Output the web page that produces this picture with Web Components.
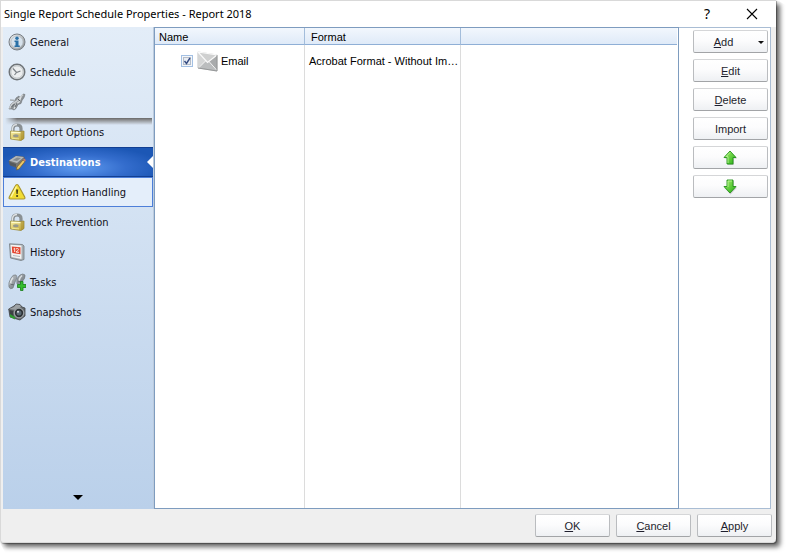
<!DOCTYPE html>
<html lang="en">
<head>
<meta charset="utf-8">
<title>Single Report Schedule Properties - Report 2018</title>
<style>
  body { margin: 0; background: #fff; color: #000; font: 11px/14px "Liberation Sans", Arial, sans-serif; }
</style>
</head>
<body>
<schedule-dialog>
  <title-bar slot="title">Single Report Schedule Properties - Report 2018</title-bar>
  <side-nav slot="nav">
    <nav-item icon="info">General</nav-item>
    <nav-item icon="clock">Schedule</nav-item>
    <nav-item icon="tools">Report</nav-item>
    <nav-item icon="lock" seam>Report Options</nav-item>
    <nav-item icon="drive" selected>Destinations</nav-item>
    <nav-item icon="warn" hot>Exception Handling</nav-item>
    <nav-item icon="lock">Lock Prevention</nav-item>
    <nav-item icon="calendar">History</nav-item>
    <nav-item icon="steps">Tasks</nav-item>
    <nav-item icon="camera">Snapshots</nav-item>
  </side-nav>
  <destination-list slot="content"></destination-list>
  <push-button slot="actions" menu><u>A</u>dd</push-button>
  <push-button slot="actions"><u>E</u>dit</push-button>
  <push-button slot="actions"><u>D</u>elete</push-button>
  <push-button slot="actions">Import</push-button>
  <push-button slot="actions" label="Move up"><ui-icon name="up"></ui-icon></push-button>
  <push-button slot="actions" label="Move down"><ui-icon name="down"></ui-icon></push-button>
  <push-button slot="footer"><u>O</u>K</push-button>
  <push-button slot="footer"><u>C</u>ancel</push-button>
  <push-button slot="footer"><u>A</u>pply</push-button>
</schedule-dialog>

<script>
const GRADS = `<defs>
<linearGradient id="silver" x1="0" y1="0" x2="1" y2="1"><stop offset="0" stop-color="#f4f5f5"/><stop offset="1" stop-color="#85898c"/></linearGradient>
<linearGradient id="dark" x1="0" y1="0" x2="1" y2="1"><stop offset="0" stop-color="#c3c8cc"/><stop offset="1" stop-color="#5c6268"/></linearGradient>
<linearGradient id="gold" x1="0" y1="0" x2="1" y2="1"><stop offset="0" stop-color="#fbf3a6"/><stop offset="1" stop-color="#b99c30"/></linearGradient>
<linearGradient id="green" x1="0" y1="0" x2="1" y2="1"><stop offset="0" stop-color="#a5f06a"/><stop offset="1" stop-color="#27ae17"/></linearGradient>
</defs>`;
const ICONS = {
  info: [18, 18, `<circle cx="9" cy="9" r="8" fill="url(#silver)" stroke="#777e85"/><circle cx="9" cy="9" r="6" fill="#d7e2ec" stroke="#b3bdc6" stroke-width=".7"/><circle cx="9" cy="5.3" r="1.7" fill="#2a70a6"/><path d="M6.500 7.500h4v5h1.300V14H6.500v-1.500h1V9h-1z" fill="#2a70a6"/>`],
  clock: [18, 18, `<circle cx="9" cy="9" r="7.700" fill="#eceeef" stroke="#6f7478" stroke-width="1.600"/><circle cx="9" cy="9" r="6.200" fill="none" stroke="#bbc0c3" stroke-width="1"/><path d="M5 5.500L8.500 9.500l4-1.500M8.500 9.500L6.500 12" fill="none" stroke="#7d8287" stroke-width="1.200"/>`],
  tools: [18, 18, `<path d="M1 16l2-5 4-3 1-3 3-2 1 2 3-4 2 .5-1 3-2 3-1 3-3 1-2 4-2 1.500-2-1z" fill="#8d9296" stroke="#6b7074" stroke-width=".6"/><path d="M1.500 15.500L4 11l5-3 6-6.500" fill="none" stroke="#c9cdd0" stroke-width="1.500"/><path d="M6 16l2-5 3-2 2-5" fill="none" stroke="#dce0e2" stroke-width="1.300"/><path d="M3.500 14l3-3M7 14l2-4M10 6l2 2" stroke="#54595d" stroke-width=".9"/><path d="M2 7l5 .5" stroke="#a7adb1" stroke-width="1.500"/>`],
  lock: [18, 18, `<path d="M5 9V5.500Q5 2 9 2t4 3.500V9" fill="none" stroke="#8a9093" stroke-width="3.200"/><path d="M4.500 9V5.500Q5 1.500 9 1.500" fill="none" stroke="#dfe2e4" stroke-width="1.300"/><path d="M2.500 8l10 .5L16 8v7.500L13 17.500 2.500 16z" fill="url(#gold)" stroke="#94822f" stroke-width=".7"/><path d="M12.500 8.500L16 8v7.500l-3 2z" fill="#a68c30" opacity=".55"/><path d="M3.500 9.300l9 .3" stroke="#fffbc8" stroke-width="1.300"/><ellipse cx="7.800" cy="12.800" rx="2.900" ry="1.500" fill="#96988a"/><path d="M4 15.300l7 .6" stroke="#f0e88f"/>`],
  drive: [18, 18, `<path d="M1 8l7-5 8 1 1 4-7 7-8-3z" fill="#777775" stroke="#5a5751" stroke-width=".6"/><path d="M1 7.500L8 3l8 1-7 6z" fill="#b4b9bc"/><path d="M4.500 7.300L9 4.500l4 .5-4 3z" fill="#848a8e"/><path d="M2 9l6 2v3l-6-2z" fill="#565a5d"/><path d="M9 14l6-7 2 1.500L11 16l-2.500 1z" fill="#ecc767" stroke="#775e28" stroke-width=".7"/><path d="M15 7l1-1.500 2 1.500-1 1.500z" fill="#c57971"/>`],
  warn: [18, 18, `<path d="M9 1.500Q10 1.500 10.700 3l6 11q.8 2-1.200 2h-13Q.5 16 1.300 14l6-11Q8 1.500 9 1.500z" fill="#f2dd35" stroke="#a99530" stroke-width="1.200"/><path d="M8.500 3.500L3 14" stroke="#fff8a0" stroke-width="1.500"/><path d="M8 6.500h2.200L9.700 11H8.500z" fill="#47421c"/><circle cx="9.100" cy="13" r="1.100" fill="#47421c"/>`],
  calendar: [18, 18, `<path d="M1.500 .8L14.500 1.500 16 3v13.500L13 17.500 2.500 15z" fill="#a6adb2" stroke="#747b80" stroke-width=".8"/><path d="M2.500 1.800l11 .7V16L3.500 14z" fill="#f3f3f2"/><path d="M3.800 3.500l8.700.7v7L4.300 10z" fill="#e34731"/><path d="M5.500 6l1.200-.8V9M8 6q2-1.500 2.500.2Q10.500 7.500 8 9l3 .3" fill="none" stroke="#ffe8df" stroke-width="1"/><path d="M5 12.500l7 1" stroke="#b5bbbe"/>`],
  steps: [18, 18, `<path d="M1 14Q0 10 3 5q2-4 5-3 2 2-1 7l-2 6q-3 2-4-1zM9 11q-1-6 3-9 3-2 5 0 1 3-4 8z" fill="url(#dark)" stroke="#747c82" stroke-width=".7"/><path d="M2.500 12Q2 8 5 4.500M11 8q0-3 3-5.500" fill="none" stroke="#dce1e4" stroke-width="1.500"/><path d="M2 11l4 1M10 8l4 1" stroke="#62686e"/><path d="M12.500 8.500h2.500v3h3V14.500h-3v3h-2.500v-3h-3v-3h3z" fill="#35bd2d" stroke="#187c18" stroke-width=".8"/>`],
  camera: [18, 18, `<path d="M.7 6L6 3l2-2 4 .5L14 4l3 1v8l-5 4L2 14z" fill="#64686a" stroke="#404447" stroke-width=".8"/><path d="M1 6l5-2 2-2.500 4 .5 1 2-5 3z" fill="#9da1a3"/><path d="M1.500 7l4 1v6l-3.500-1z" fill="#3c4143"/><circle cx="11" cy="10" r="4.800" fill="#2b3033" stroke="#999ea1" stroke-width="1.300"/><circle cx="11" cy="10" r="2.500" fill="#596872"/><circle cx="10" cy="8.700" r="1" fill="#dce3e6"/><path d="M2 11l5 3v2.500L2 14z" fill="#2e9a2f"/>`],
  mail: [21, 21, `<path d="M1 1l19 3v16L1 17z" fill="#bbbdbe" stroke="#aaa" stroke-width=".7"/><path d="M1 1v16l8-7z" fill="#d5d6d6"/><path d="M20 4v16l-8-9z" fill="#a9abac"/><path d="M1.500 17L9 9.500M12 10.500l8 9" stroke="#f3f3f3" stroke-width="1"/><path d="M1 1l9.500 10.500L20 4z" fill="#cfd0d0" stroke="#fafafa" stroke-width="1.200"/><path d="M1 17l19 3V4" fill="none" stroke="#8d8f90" stroke-width=".8"/>`],
  up: [16, 16, `<path d="M8.500 1.500L15 8.500h-3V15H6V8.500H2.500z" fill="#9a9a9a" opacity=".5"/><path d="M8 1l6 6.500h-3V14H5V7.500H2z" fill="url(#green)" stroke="#239218" stroke-width=".9"/><path d="M8 2.500L4 6.700h2V13" fill="none" stroke="#c0f7a0" stroke-width=".8"/>`],
  down: [16, 16, `<path d="M6 2h6v6.500h3L8.500 15.500 2 8.500h4z" fill="#9a9a9a" opacity=".5"/><path d="M5 1h6v6.500h3L8 14 2 7.500h3z" fill="url(#green)" stroke="#239218" stroke-width=".9"/><path d="M6 8V2h4" fill="none" stroke="#c0f7a0" stroke-width=".8"/>`]
};

class UiIcon extends HTMLElement {
  connectedCallback() {
    const [w, h, art] = ICONS[this.getAttribute('name')];
    this.attachShadow({ mode: 'open' }).innerHTML = `
      <style>:host { display: inline-flex; flex: none } svg { display: block }</style>
      <svg width="${w}" height="${h}" viewBox="0 0 ${w} ${h}" aria-hidden="true">${GRADS}${art}</svg>`;
  }
}
customElements.define('ui-icon', UiIcon);

customElements.define('push-button', class extends HTMLElement {
  connectedCallback() {
    const label = this.getAttribute('label');
    this.attachShadow({ mode: 'open' }).innerHTML = `
      <style>
        :host { display: block; width: 75px }
        button { display: flex; align-items: center; justify-content: center; position: relative; box-sizing: border-box;
          width: 100%; height: 23px; padding: 0; border: 1px solid #c6c8ca; border-color: #d5d6d8 #babcbf #a2a4a7; border-radius: 2px;
          background: linear-gradient(#fff, #fcfcfd 45%, #eef0f3); color: #1e1e2d; font: inherit; }
        span { display: flex }
        :host([menu]) button { padding-right: 14px }
        :host([label]) button { padding-right: 2px }
        .arrow { position: absolute; right: 3px; top: 10px; border: 3px solid transparent; border-top-color: #111; border-bottom: 0 }
      </style>
      <button type="button" ${label ? `aria-label="${label}"` : ''}><span><slot></slot></span>${this.hasAttribute('menu') ? '<i class="arrow"></i>' : ''}</button>`;
  }
});

customElements.define('title-bar', class extends HTMLElement {
  connectedCallback() {
    this.attachShadow({ mode: 'open' }).innerHTML = `
      <style>
        :host { display: flex; align-items: center; height: 26px; padding: 0 15px 0 3px; background: #fff; font: 11px/16px "Noto Sans", "Open Sans", sans-serif }
        h1 { flex: 1; margin: 0; font: inherit; white-space: nowrap }
        button { width: 18px; height: 20px; padding: 0; border: 0; background: none; color: #000; font: 14px/18px "Noto Sans", sans-serif }
        .close { display: grid; place-items: center; margin-left: 27px }
      </style>
      <h1><slot></slot></h1>
      <button type="button">?</button>
      <button type="button" class="close" aria-label="Close"><svg width="12" height="12"><path d="M1 1l10 10M11 1L1 11" stroke="#000" stroke-width="1.100"/></svg></button>`;
  }
});

customElements.define('side-nav', class extends HTMLElement {
  connectedCallback() {
    this.attachShadow({ mode: 'open' }).innerHTML = `
      <style>
        :host { display: flex; flex-direction: column; border-right: 1px solid #bccbdd; background: linear-gradient(#e3edf8, #bad0ea);
          font: 11px/14px "DejaVu Sans Condensed", "DejaVu Sans", sans-serif }
        nav { display: flex; flex-direction: column; flex: 1 }
        .more { align-self: center; width: 20px; height: 12px; margin-bottom: 5px; padding: 0; border: 0; background: none }
        .more svg { display: block; margin: auto }
      </style>
      <nav aria-label="Sections"><slot></slot></nav>
      <button type="button" class="more" aria-label="More"><svg width="10" height="6"><path d="M0 0h10L5 5z"/></svg></button>`;
  }
});

customElements.define('nav-item', class extends HTMLElement {
  connectedCallback() {
    this.attachShadow({ mode: 'open' }).innerHTML = `
      <style>
        :host { display: block; position: relative; height: 30px }
        a { display: flex; align-items: center; gap: 4px; box-sizing: border-box; height: 30px; padding: 0 0 0 5px; color: #101018; text-decoration: none; white-space: nowrap }
        span { padding-top: 2px }
        :host([selected]) a { border: 1px solid #123f92; border-width: 1px 0; color: #fff; font-weight: bold;
          background: radial-gradient(ellipse at 50% 70%, #609cf0, #346dcd 45%, #1c57b5 80%) }
        :host([selected])::after { content: ""; position: absolute; right: 0; top: 9px; border: 6px solid transparent; border-right-color: #fff; border-left: 0 }
        :host([hot]) a { padding-left: 4px; border: 1px solid #4d7fd9; background: #e4eefa }
        :host([seam])::before { content: ""; position: absolute; left: 2px; right: 1px; top: 1px; height: 7px;
          background: linear-gradient(#686868, #9a9da1 40%, #d5dfea00); mask-image: linear-gradient(90deg, transparent, #000 12px) }
      </style>
      <a href="#" ${this.hasAttribute('selected') ? 'aria-current="page"' : ''}><ui-icon name="${this.getAttribute('icon')}"></ui-icon><span><slot></slot></span></a>`;
  }
});

customElements.define('destination-list', class extends HTMLElement {
  connectedCallback() {
    this.attachShadow({ mode: 'open' }).innerHTML = `
      <style>
        :host { display: grid; padding-right: 1px; border: 1px solid #7e9cbf; background: #fff }
        table { width: 100%; height: 100%; border-collapse: separate; border-spacing: 0; table-layout: fixed }
        th, td { box-sizing: border-box; padding: 0; font-weight: normal; text-align: left; border-right: 1px solid #dcdcdc }
        th { height: 17px; padding: 2px 4px 0; border-right-color: #a3bddb; border-bottom: 1px solid #8fafd6; background: linear-gradient(#f2f7fd, #dfeaf8); line-height: 14px; vertical-align: bottom }
        th + th { padding-left: 6px }
        th:last-child, td:last-child { border-right: 0 }
        .row td { height: 32px }
        .item { display: flex; align-items: center; padding-left: 26px }
        .item ui-icon { margin: 0 3px 0 4px }
        .format { padding-left: 4px; white-space: nowrap }
        input { appearance: none; box-sizing: border-box; width: 12px; height: 12px; margin: 0; border: 1px solid #a3c0e3;
          background: #f4f6f9 url("data:image/svg+xml,%3Csvg xmlns='http://www.w3.org/2000/svg' viewBox='0 0 10 10'%3E%3Crect x='1.500' y='1.500' width='7' height='7' fill='%23e9edf3' stroke='%23b5bdc9'/%3E%3Cpath d='M2.500 5l2 2.500L8 2' fill='none' stroke='%23354b82' stroke-width='1.400'/%3E%3C/svg%3E") }
      </style>
      <table>
        <colgroup><col style="width:150px"><col style="width:156px"><col></colgroup>
        <thead><tr><th scope="col">Name</th><th scope="col">Format</th><th></th></tr></thead>
        <tbody>
          <tr class="row"><td><div class="item"><input type="checkbox" id="email" checked><ui-icon name="mail"></ui-icon><label for="email">Email</label></div></td>
          <td class="format">Acrobat Format - Without Im…</td><td></td></tr>
          <tr><td></td><td></td><td></td></tr>
        </tbody>
      </table>`;
  }
});

customElements.define('schedule-dialog', class extends HTMLElement {
  connectedCallback() {
    this.attachShadow({ mode: 'open' }).innerHTML = `
      <style>
        :host { display: flex; box-sizing: border-box; min-height: 100vh; padding: 0 15px 15px 0 }
        main { flex: 1; display: flex; flex-direction: column; min-width: 0; border: 1px solid #d9d9d9; border-right: 0; border-radius: 0 0 4px 3px;
          background: #efefef; box-shadow: 4px 4px 5px #0009, 1px 1px 1px #0005; clip-path: polygon(0 0, calc(100% + 1px) 0, calc(100% + 15px) 8px, calc(100% + 15px) calc(100% + 15px), 8px calc(100% + 15px), 0 100%) }
        .body { flex: 1; display: grid; grid-template-columns: 151px minmax(0, 1fr) 92px; padding: 0 5px 0 2px }
        .actions { display: flex; flex-direction: column; gap: 6px; padding: 2px 2px 0 14px; border: 1px solid #a9bdd4; border-left: 0; background: #fff }
        footer { display: flex; justify-content: flex-end; gap: 6px; padding: 5px 4px 5px 0 }
      </style>
      <main>
        <slot name="title"></slot>
        <div class="body">
          <slot name="nav"></slot>
          <slot name="content"></slot>
          <div class="actions"><slot name="actions"></slot></div>
        </div>
        <footer><slot name="footer"></slot></footer>
      </main>`;
  }
});
</script>
</body>
</html>
